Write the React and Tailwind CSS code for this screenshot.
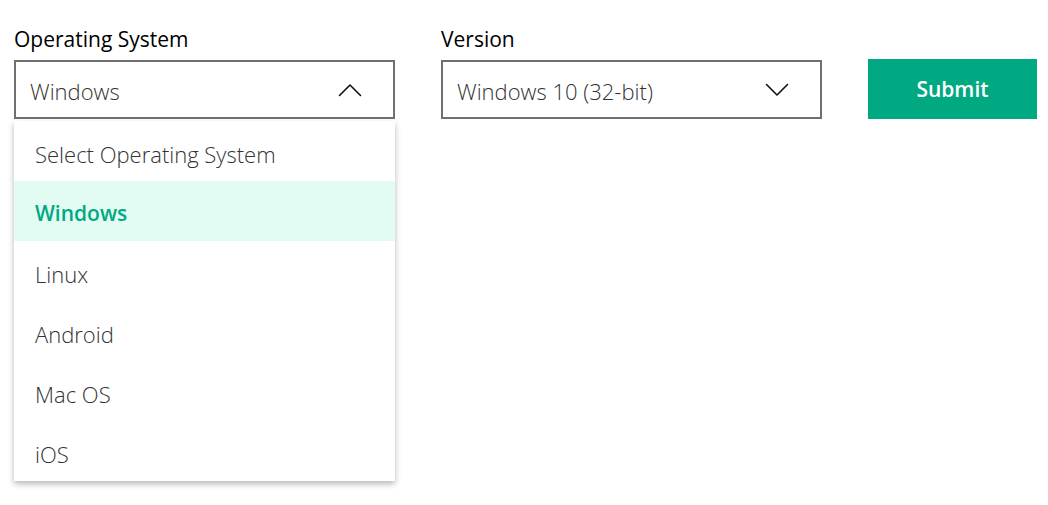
import React, { useState } from 'react';

const options = ['Select Operating System', 'Windows', 'Linux', 'Android', 'Mac OS', 'iOS'];

const Chevron = ({ up }) => (
  <svg width="24" height="14" viewBox="0 0 24 14" fill="none" stroke="#111" strokeWidth="1.6" strokeLinecap="round" strokeLinejoin="round">
    {up ? <path d="M1.5 12.5 L12 2 L22.5 12.5" /> : <path d="M1.5 1.5 L12 12 L22.5 1.5" />}
  </svg>
);

const App = () => {
  const [os, setOs] = useState('Windows');

  return (
    <div className="w-[1048px] h-[505px] bg-white font-['Open_Sans',sans-serif] pt-[25px] pl-[14px]">
      <div className="flex items-end gap-[46px]">
        <div className="w-[381px] relative">
          <div className="text-[21px] leading-[28px] text-black mb-[7px]">Operating System</div>
          <div className="h-[59px] border-2 border-[#707070] flex items-center justify-between pl-[14px] pr-[31px]">
            <span className="text-[22px] font-light text-[#333] pt-[3px]">{os}</span>
            <Chevron up />
          </div>
          {/* open list */}
          <div className="absolute left-0 top-[96px] w-[381px] bg-white shadow-[0_3px_6px_rgba(0,0,0,0.28)] z-10">
            {options.map((o) => (
              <div
                key={o}
                onClick={() => setOs(o)}
                className={
                  o === os
                    ? 'h-[60px] flex items-center pl-[21px] pt-[6px] bg-[#e3fcf3] text-[#01a982] text-[21px] font-semibold'
                    : 'h-[60px] flex items-center pl-[21px] pt-[6px] text-[#333] text-[22px] font-light'
                }
              >
                {o}
              </div>
            ))}
          </div>
        </div>
        <div className="w-[381px]">
          <div className="text-[21px] leading-[28px] text-black mb-[7px]">Version</div>
          <div className="h-[59px] border-2 border-[#707070] flex items-center justify-between pl-[14px] pr-[31px]">
            <span className="text-[22px] font-light text-[#333] pt-[3px]">Windows 10 (32-bit)</span>
            <Chevron />
          </div>
        </div>
        <button className="w-[169px] h-[60px] bg-[#01a982] text-white text-[21px] font-semibold pt-[2px]">
          Submit
        </button>
      </div>
    </div>
  );
};

export default App;
